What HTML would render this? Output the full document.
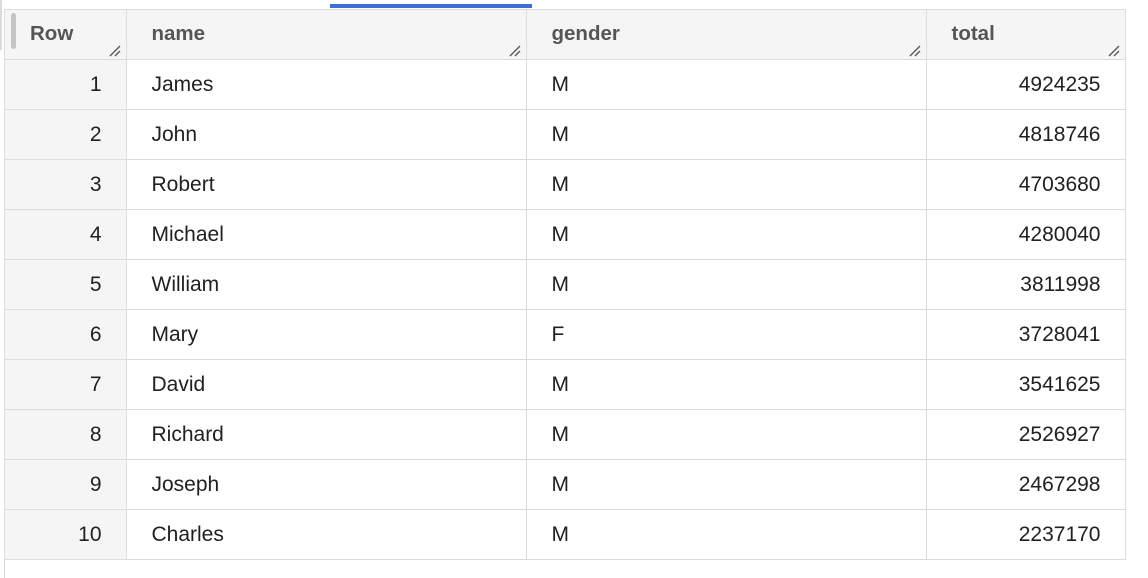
<!DOCTYPE html>
<html><head><style>
body{margin:0;width:1148px;height:578px;background:#fff;font-family:"Liberation Sans",Arial,sans-serif;position:relative;overflow:hidden}
.bar{position:absolute;left:330px;top:4px;width:202px;height:4px;background:#3b6ed6}
.leftline{position:absolute;left:4px;top:9px;width:1px;height:569px;background:#dadce0}
.thumb{position:absolute;left:11px;top:13px;width:5px;height:36px;border-radius:3px;background:#c4c4c4}
.edge{position:absolute;left:0;top:0;width:2px;height:50px;background:#dcdcdc}
table{position:absolute;left:5px;top:9px;border-collapse:collapse;table-layout:fixed}
td,th{height:49px;padding:0;border:1px solid #dadce0;font-size:21px;color:#202124;font-weight:normal}
th{background:#f5f5f5;color:#555;text-align:left;padding-left:25px;vertical-align:top;padding-top:12px;height:37px;position:relative;font-weight:bold;font-size:20.5px}
th:first-child{border-left:none}
td:first-child{border-left:none;background:#f5f5f5;text-align:right;padding-right:24px}
td{padding-left:25px}
td.n{text-align:right;padding-right:24px;padding-left:0}
.rs{position:absolute;right:5px;bottom:2px;width:12px;height:12px}
</style></head><body>
<div class="edge"></div>
<div class="bar"></div>
<div class="leftline"></div>
<table>
<colgroup><col style="width:121px"><col style="width:400px"><col style="width:400px"><col style="width:199px"></colgroup>
<tr><th>Row<svg class="rs" viewBox="0 0 12 12"><path d="M1 11L11 1M6 11L11 6" stroke="#555" stroke-width="1.4"/></svg></th><th>name<svg class="rs" viewBox="0 0 12 12"><path d="M1 11L11 1M6 11L11 6" stroke="#555" stroke-width="1.4"/></svg></th><th>gender<svg class="rs" viewBox="0 0 12 12"><path d="M1 11L11 1M6 11L11 6" stroke="#555" stroke-width="1.4"/></svg></th><th>total<svg class="rs" viewBox="0 0 12 12"><path d="M1 11L11 1M6 11L11 6" stroke="#555" stroke-width="1.4"/></svg></th></tr>
<tr><td>1</td><td>James</td><td>M</td><td class="n">4924235</td></tr>
<tr><td>2</td><td>John</td><td>M</td><td class="n">4818746</td></tr>
<tr><td>3</td><td>Robert</td><td>M</td><td class="n">4703680</td></tr>
<tr><td>4</td><td>Michael</td><td>M</td><td class="n">4280040</td></tr>
<tr><td>5</td><td>William</td><td>M</td><td class="n">3811998</td></tr>
<tr><td>6</td><td>Mary</td><td>F</td><td class="n">3728041</td></tr>
<tr><td>7</td><td>David</td><td>M</td><td class="n">3541625</td></tr>
<tr><td>8</td><td>Richard</td><td>M</td><td class="n">2526927</td></tr>
<tr><td>9</td><td>Joseph</td><td>M</td><td class="n">2467298</td></tr>
<tr><td>10</td><td>Charles</td><td>M</td><td class="n">2237170</td></tr>
</table>
<div class="thumb"></div>
</body></html>
